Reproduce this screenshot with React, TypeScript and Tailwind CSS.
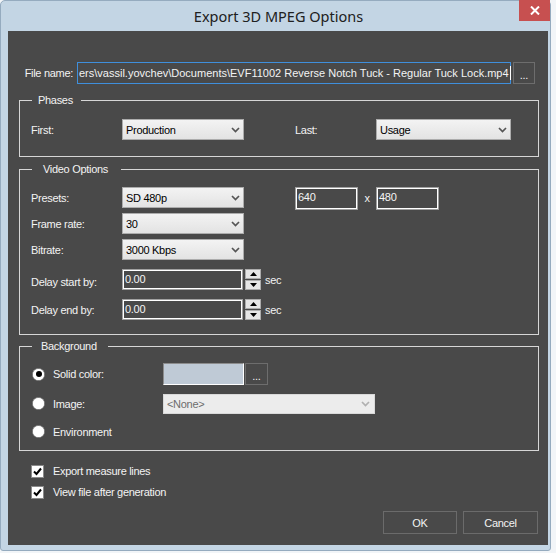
import React from "react";

const Chevron = ({ color = "#555555" }: { color?: string }) => (
  <svg width="9" height="6" viewBox="0 0 9 6" className="shrink-0">
    <path d="M1 1 L4.5 4.5 L8 1" stroke={color} strokeWidth="1.7" fill="none" />
  </svg>
);

const Select = ({ value, w, disabled }: { value: string; w: string; disabled?: boolean }) =>
  disabled ? (
    <div className={`${w} h-[20px] flex items-center justify-between border border-[#d9d9d9] bg-[#ececec] pl-[3px] pr-[4px] text-[#6d6d6d]`}>
      <span>{value}</span>
      <Chevron color="#b0b0b0" />
    </div>
  ) : (
    <div className={`${w} h-[21px] flex items-center justify-between border border-[#acacac] bg-linear-to-b from-[#f3f3f3] to-[#e3e3e3] pl-[3px] pr-[3px] text-black`}>
      <span>{value}</span>
      <Chevron />
    </div>
  );

const TextBox = ({ value, w, h }: { value: string; w: string; h: string }) => (
  <div className={`${w} ${h} flex items-start border border-[#a0a0a0] shadow-[inset_0_0_0_1px_#ffffff] pl-[2px] pt-[2px] text-[#f5f5f5]`}>
    {value}
  </div>
);

const Spinner = () => (
  <div className="flex flex-col gap-[1px] ml-[2px]">
    <div className="w-[16px] h-[10px] flex items-center justify-center border border-[#acacac] bg-[#e6e6e6]">
      <svg width="7" height="4" viewBox="0 0 7 4">
        <path d="M0 4 L3.5 0 L7 4 Z" fill="#000" />
      </svg>
    </div>
    <div className="w-[16px] h-[10px] flex items-center justify-center border border-[#acacac] bg-[#e6e6e6]">
      <svg width="7" height="4" viewBox="0 0 7 4">
        <path d="M0 0 L3.5 4 L7 0 Z" fill="#000" />
      </svg>
    </div>
  </div>
);

const Radio = ({ checked }: { checked?: boolean }) => (
  <div className="ml-[1px] w-[13px] h-[13px] rounded-full border border-[#8a8a8a] bg-linear-to-br from-[#dcdcdc] to-[#ffffff] flex items-center justify-center shrink-0">
    <div className="w-[11px] h-[11px] rounded-full bg-white flex items-center justify-center">
      {checked && <div className="w-[6px] h-[6px] rounded-full bg-black" />}
    </div>
  </div>
);

const Check = () => (
  <div className="w-[13px] h-[13px] border border-[#8a8a8a] bg-white flex items-center justify-center shrink-0">
    <svg width="9" height="9" viewBox="0 0 9 9">
      <path d="M1 4.5 L3.5 7 L8 1.5" stroke="#000" strokeWidth="2" fill="none" />
    </svg>
  </div>
);

export default function App() {
  return (
    <div className="w-[556px] h-[553px] bg-[#f2f5f8] font-['Liberation_Sans',Arial,sans-serif] text-[11px] tracking-[-0.3px] leading-[14px] text-[#f3f3f3]">
      <div className="relative w-[551px] h-[551px] bg-[#c3d5e4] border border-[#95abbf] rounded-t-[5px] rounded-b-[3px] flex flex-col">
        {/* title bar */}
        <div className="h-[30px] flex items-center justify-center pl-[6px] pb-[1px] font-['Noto_Sans',sans-serif] text-[14.5px] tracking-normal text-[#202020]">
          Export 3D MPEG Options
        </div>
        <div className="absolute top-[-1px] right-[0px] w-[31px] h-[21px] bg-[#c75050] flex items-center justify-center">
          <svg width="10" height="9" viewBox="0 0 10 9">
            <path d="M1 0.5 L9 8.5 M9 0.5 L1 8.5" stroke="#ffffff" strokeWidth="2" />
          </svg>
        </div>

        {/* client area */}
        <div className="ml-[7px] w-[540px] h-[514px] bg-[#494949] flex flex-col">
          {/* file row */}
          <div className="mt-[31px] h-[22px] flex items-center">
            <div className="w-[69px] pr-[4px] text-right">File name:</div>
            <div className="w-[434px] h-[22px] border border-[#3f8fdc] flex items-center pl-[1px] whitespace-nowrap tracking-normal">
              <span>ers\vassil.yovchev\Documents\EVF11002 Reverse Notch Tuck - Regular Tuck Lock.mp4</span>
              <span className="ml-[1px] w-[1px] h-[14px] bg-white shrink-0" />
            </div>
            <div className="ml-[2px] w-[22px] h-[22px] border border-[#6d6d6d] flex items-center justify-center pt-[3px]">...</div>
          </div>

          {/* Phases */}
          <fieldset className="mt-[9px] ml-[11px] w-[520px] h-[64px] border border-[#d6d6d6] pl-[11px] pt-[12px]">
            <legend className="ml-[1px] pl-[6px] pr-[8px] leading-[14px]">Phases</legend>
            <div className="h-[21px] flex items-center">
              <div className="w-[91px]">First:</div>
              <Select value="Production" w="w-[122px]" />
              <div className="w-[51px]" />
              <div className="w-[81px]">Last:</div>
              <Select value="Usage" w="w-[135px]" />
            </div>
          </fieldset>

          {/* Video Options */}
          <fieldset className="mt-[5px] ml-[11px] w-[520px] h-[173px] border border-[#d6d6d6] pl-[11px] pt-[11px]">
            <legend className="ml-[1px] pl-[11px] pr-[13px] leading-[14px]">Video Options</legend>
            <div className="flex flex-col gap-[5px]">
              <div className="h-[21px] flex items-center">
                <div className="w-[91px]">Presets:</div>
                <Select value="SD 480p" w="w-[122px]" />
                <div className="w-[51px]" />
                <div className="h-[21px] flex items-start">
                  <TextBox value="640" w="w-[63px]" h="h-[23px]" />
                  <div className="w-[18px] h-[23px] flex items-center justify-center pb-[1px]">x</div>
                  <TextBox value="480" w="w-[63px]" h="h-[23px]" />
                </div>
              </div>
              <div className="h-[21px] flex items-center">
                <div className="w-[91px]">Frame rate:</div>
                <Select value="30" w="w-[122px]" />
              </div>
              <div className="h-[21px] flex items-center">
                <div className="w-[91px]">Bitrate:</div>
                <Select value="3000 Kbps" w="w-[122px]" />
              </div>
              <div className="mt-[4px] h-[21px] flex items-center">
                <div className="w-[91px] pt-[4px]">Delay start by:</div>
                <TextBox value="0.00" w="w-[121px]" h="h-[21px]" />
                <Spinner />
                <div className="ml-[4px]">sec</div>
              </div>
              <div className="mt-[4px] h-[21px] flex items-center">
                <div className="w-[91px] pt-[1px]">Delay end by:</div>
                <TextBox value="0.00" w="w-[121px]" h="h-[21px]" />
                <Spinner />
                <div className="ml-[4px]">sec</div>
              </div>
            </div>
          </fieldset>

          {/* Background */}
          <fieldset className="mt-[4px] ml-[11px] w-[520px] h-[112px] border border-[#d6d6d6] pl-[11px] pt-[10px]">
            <legend className="ml-[1px] pl-[9px] pr-[11px] leading-[14px]">Background</legend>
            <div className="h-[22px] flex items-center">
              <Radio checked />
              <div className="ml-[8px] w-[110px]">Solid color:</div>
              <div className="w-[81px] h-[22px] border-t border-l border-t-[#8c8c8c] border-l-[#8c8c8c] border-b border-r border-b-white border-r-white bg-[#bfcad6]" />
              <div className="ml-[1px] w-[23px] h-[22px] border border-[#6d6d6d] flex items-center justify-center pt-[3px]">...</div>
            </div>
            <div className="mt-[8px] h-[21px] flex items-center">
              <Radio />
              <div className="ml-[8px] w-[110px]">Image:</div>
              <Select value="<None>" w="w-[212px]" disabled />
            </div>
            <div className="mt-[7px] h-[21px] flex items-center">
              <Radio />
              <div className="ml-[8px]">Environment</div>
            </div>
          </fieldset>

          {/* checkboxes */}
          <div className="mt-[12px] ml-[23px] h-[16px] flex items-center">
            <Check />
            <div className="ml-[9px]">Export measure lines</div>
          </div>
          <div className="mt-[5px] ml-[23px] h-[16px] flex items-center">
            <Check />
            <div className="ml-[9px]">View file after generation</div>
          </div>

          {/* buttons */}
          <div className="mt-[11px] mr-[10px] flex justify-end gap-[6px]">
            <div className="w-[74px] h-[23px] border border-[#6b6b6b] flex items-center justify-center">OK</div>
            <div className="w-[75px] h-[23px] border border-[#6b6b6b] flex items-center justify-center">Cancel</div>
          </div>
        </div>
      </div>
    </div>
  );
}
